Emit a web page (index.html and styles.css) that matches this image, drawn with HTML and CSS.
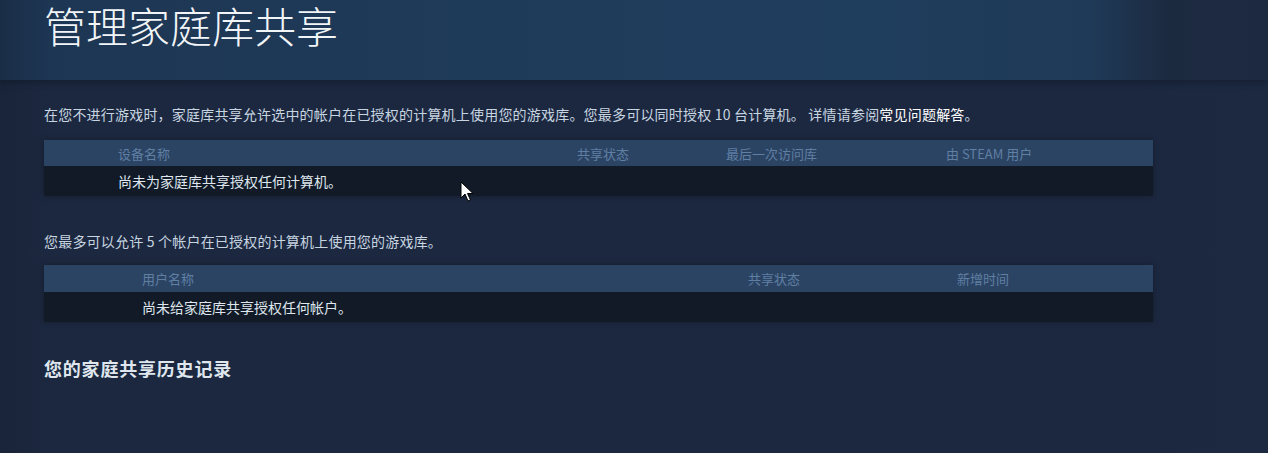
FILE: index.html
```html
<!DOCTYPE html>
<html lang="zh-CN">
<head>
<meta charset="utf-8">
<title>管理家庭库共享</title>
<link rel="stylesheet" href="styles.css">
</head>
<body>
<div class="page">
  <header class="band">
    <h1 class="title">管理家庭库共享</h1>
  </header>
  <main class="content">
    <p class="intro">在您不进行游戏时，家庭库共享允许选中的帐户在已授权的计算机上使用您的游戏库。您最多可以同时授权 10 台计算机。 详情请参阅<a class="link" href="#">常见问题解答</a>。</p>
    <div class="table t1">
      <div class="row head">
        <span>设备名称</span><span>共享状态</span><span>最后一次访问库</span><span>由 STEAM 用户</span>
      </div>
      <div class="row body">
        <span>尚未为家庭库共享授权任何计算机。</span>
      </div>
    </div>
    <p class="intro second">您最多可以允许 5 个帐户在已授权的计算机上使用您的游戏库。</p>
    <div class="table t2">
      <div class="row head">
        <span>用户名称</span><span>共享状态</span><span>新增时间</span>
      </div>
      <div class="row body">
        <span>尚未给家庭库共享授权任何帐户。</span>
      </div>
    </div>
    <h2 class="history">您的家庭共享历史记录</h2>
  </main>
  <svg class="cursor" width="14" height="22" viewBox="0 0 14 22"><path d="M1 1 L1 17 L5 13 L8 20 L10.5 19 L7.5 12.5 L13 12.5 Z" fill="#fff" stroke="#000" stroke-width="1"/></svg>
</div>
</body>
</html>
```

FILE: styles.css
```css
html, body {
  margin: 0;
  padding: 0;
}
body {
  background: #1b2639;
  font-family: "Noto Sans CJK SC", "Noto Sans", sans-serif;
  color: #c7d5e0;
  width: 1268px;
  height: 453px;
  overflow: hidden;
}
.page {
  position: relative;
  height: 453px;
  background: linear-gradient(to right, #19243a 0%, #1c283f 4%, #1c2840 90%, #1d2941 100%);
}
.band {
  height: 80px;
  background: linear-gradient(to right, #1a2d47 0%, #1d3653 4%, #1f3c5b 45%, #1f3d5c 70%, #1f3a58 86%, #1c2a40 92%, #1d2941 100%);
  box-shadow: 0 3px 6px rgba(10, 18, 30, 0.35);
  padding: 3px 44px 0;
  box-sizing: border-box;
}
.title {
  margin: 0;
  font-size: 42px;
  font-weight: 300;
  line-height: 44px;
  color: #f2f5f8;
  letter-spacing: 0;
}
.content {
  padding: 0 44px;
  width: 1109px;
}
.intro {
  margin: 24px 0 0;
  font-size: 14px;
  line-height: 20px;
  color: #c7d5e0;
  letter-spacing: 0.2px;
  white-space: nowrap;
}
.link {
  color: #ffffff;
  text-decoration: none;
}
.second {
  margin-top: 35px;
}
.table {
  margin-top: 16px;
  box-shadow: 0 0 6px rgba(0, 0, 0, 0.3);
}
.t2 {
  margin-top: 14px;
}
.row {
  display: grid;
  align-items: center;
  white-space: nowrap;
}
.head {
  height: 26px;
  background: #2c4464;
  color: #5f7fa3;
  font-size: 13px;
}
.t2 .head {
  height: 27px;
}
.body {
  height: 30px;
  background: #111a26;
  color: #dfe6ee;
  font-size: 14px;
}
.t1 .row {
  padding-left: 74px;
  grid-template-columns: 459px 149px 220px 1fr;
}
.t2 .row {
  padding-left: 98px;
  grid-template-columns: 606px 209px 1fr;
}
.history {
  margin: 34px 0 0;
  font-size: 18px;
  line-height: 24px;
  font-weight: 700;
  letter-spacing: 0.8px;
  color: #dfe6ee;
}
.cursor {
  position: absolute;
  left: 460px;
  top: 181px;
}
```
